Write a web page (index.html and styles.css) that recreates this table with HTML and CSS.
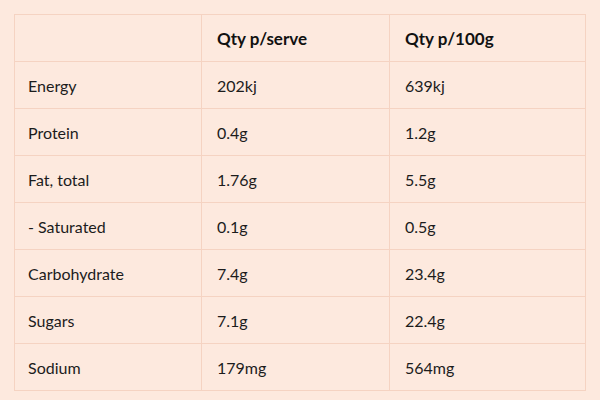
FILE: index.html
```html
<!DOCTYPE html>
<html>
<head>
<meta charset="utf-8">
<link rel="stylesheet" href="styles.css">
</head>
<body>
<div class="wrap">
<table class="nutrition">
  <colgroup><col class="c1"><col class="c2"><col class="c3"></colgroup>
  <thead>
    <tr><th></th><th>Qty p/serve</th><th>Qty p/100g</th></tr>
  </thead>
  <tbody>
    <tr><td>Energy</td><td>202kj</td><td>639kj</td></tr>
    <tr><td>Protein</td><td>0.4g</td><td>1.2g</td></tr>
    <tr><td>Fat, total</td><td>1.76g</td><td>5.5g</td></tr>
    <tr><td>- Saturated</td><td>0.1g</td><td>0.5g</td></tr>
    <tr><td>Carbohydrate</td><td>7.4g</td><td>23.4g</td></tr>
    <tr><td>Sugars</td><td>7.1g</td><td>22.4g</td></tr>
    <tr><td>Sodium</td><td>179mg</td><td>564mg</td></tr>
  </tbody>
</table>
</div>
</body>
</html>
```
FILE: styles.css
```css
html, body {
  margin: 0;
  padding: 0;
  background: #fde9de;
}
.wrap {
  padding: 14px 15px 0 14px;
}
.nutrition {
  width: 571px;
  border-collapse: collapse;
  table-layout: fixed;
  font-family: "Lato", "Open Sans", sans-serif;
  font-size: 16px;
  color: #1c1c1c;
}
.c1 { width: 187px; }
.c2 { width: 188px; }
.c3 { width: 196px; }
.nutrition th,
.nutrition td {
  border: 1.5px solid #f5d3c2;
  height: 47px;
  padding: 0 15px;
  text-align: left;
  box-sizing: border-box;
}
.nutrition td:first-child {
  padding-left: 13px;
}
.nutrition th {
  font-size: 17px;
  font-weight: 700;
  color: #111;
}
```
